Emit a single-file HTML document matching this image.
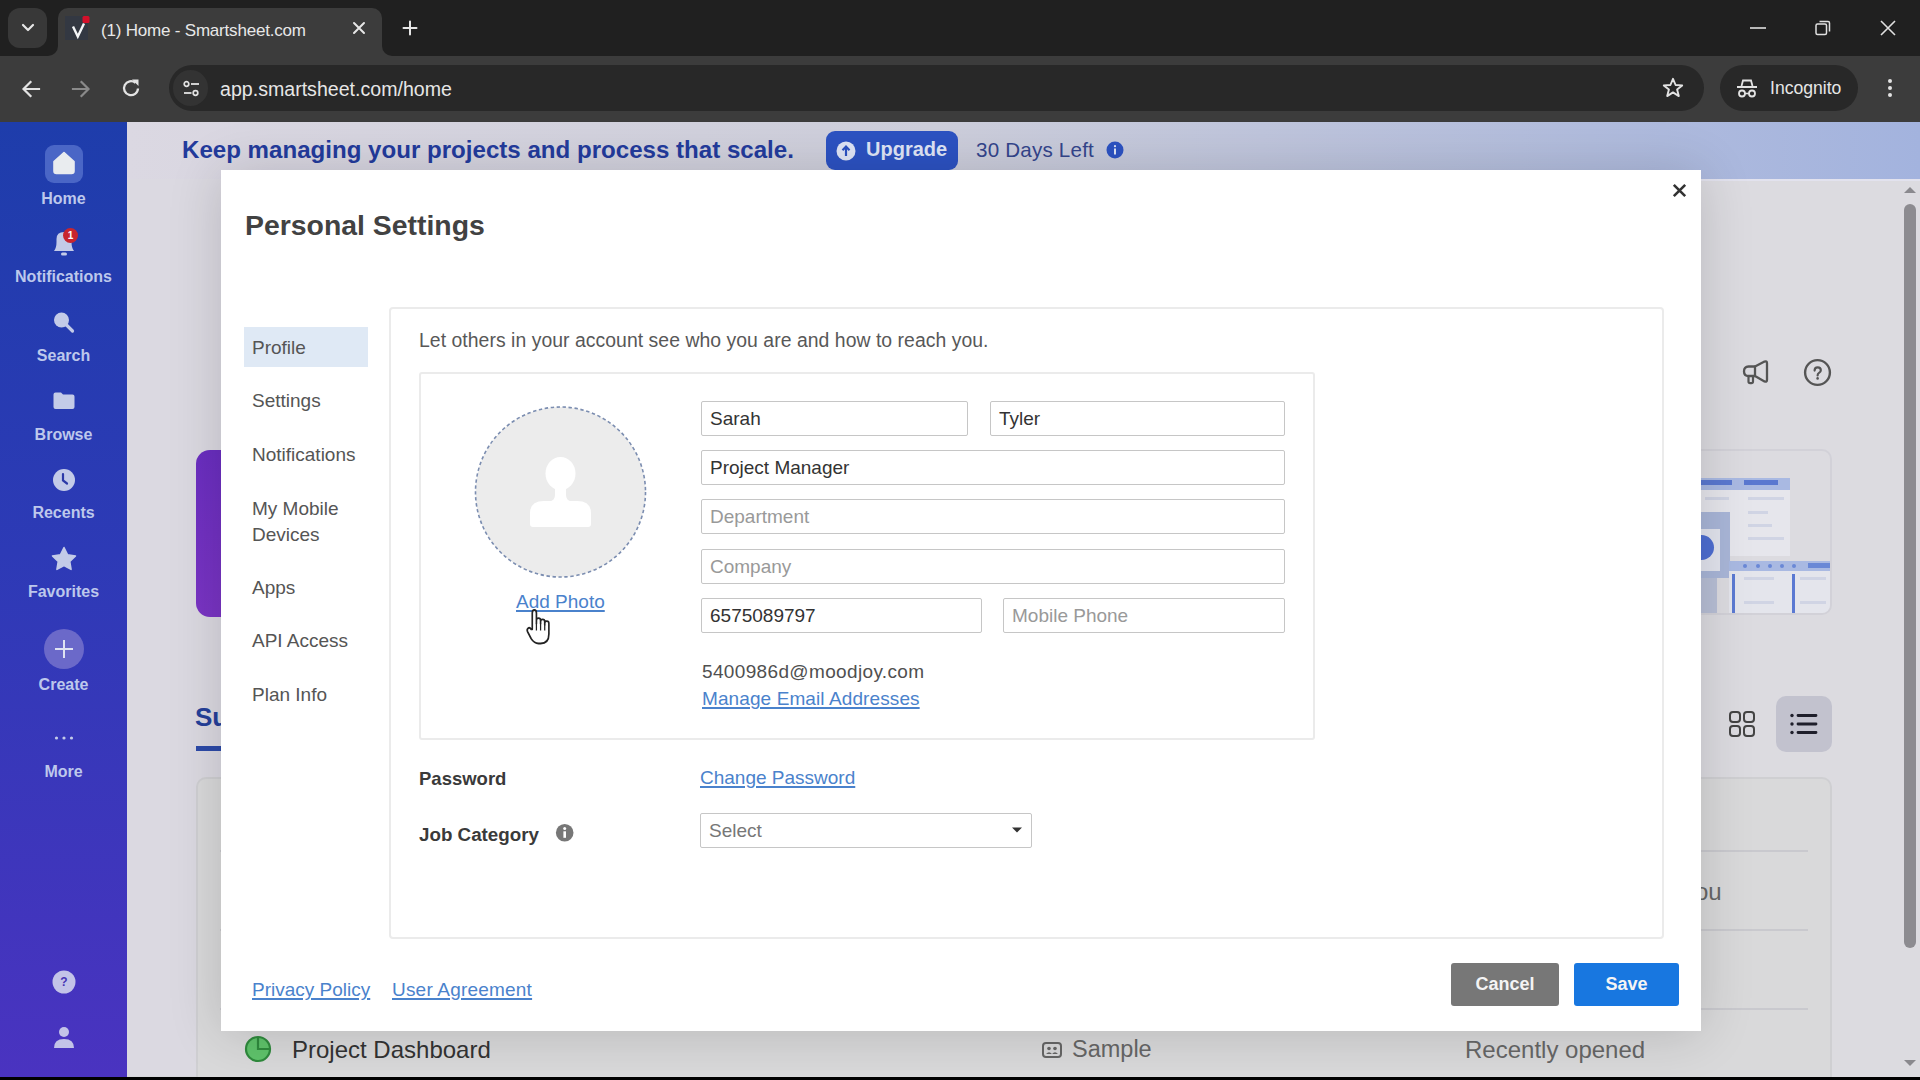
<!DOCTYPE html>
<html><head><meta charset="utf-8">
<style>
*{box-sizing:border-box;margin:0;padding:0}
html,body{width:1920px;height:1080px;overflow:hidden;background:#000;font-family:"Liberation Sans",sans-serif}
.abs{position:absolute}
#tabstrip{left:0;top:0;width:1920px;height:56px;background:#202020}
#toolbar{left:0;top:56px;width:1920px;height:66px;background:#3c3c3c}
#page{left:0;top:122px;width:1920px;height:955px;background:#d6d6da;overflow:hidden}
#sidebar{left:0;top:0;width:127px;height:955px;background:linear-gradient(180deg,#1e3dab 0%,#2d3ab6 45%,#4a33c0 100%)}
#banner{left:127px;top:0;width:1793px;height:57px;background:linear-gradient(90deg,#dbd8e2 0%,#cdcedb 45%,#a3b3de 100%)}
#modal{left:221px;top:170px;width:1480px;height:861px;background:#fff}
.sl{position:absolute;left:0;width:127px;text-align:center;font-size:16px;font-weight:bold;color:#bdc8ec;letter-spacing:0px;line-height:18px}
.t{position:absolute;white-space:nowrap}
.inp{position:absolute;border:1px solid #c6c6c6;border-radius:2px;padding-left:8px;font-size:19px;line-height:33px;white-space:nowrap;background:#fff}
.btn{position:absolute;border-radius:3px;color:#f4f4f4;font-size:18px;font-weight:bold;text-align:center;line-height:43px}
#bottombar{left:0;top:1077px;width:1920px;height:3px;background:#000}
</style></head>
<body>

<div id="tabstrip" class="abs">
  <div class="abs" style="left:8px;top:8px;width:39px;height:40px;border-radius:12px;background:#383838"></div>
  <svg class="abs" style="left:19px;top:20px" width="18" height="16" viewBox="0 0 18 16"><path d="M4 5 L9 10 L14 5" fill="none" stroke="#e6e6e6" stroke-width="2.2" stroke-linecap="round" stroke-linejoin="round"/></svg>
  <div class="abs" style="left:58px;top:8px;width:324px;height:48px;border-radius:10px 10px 0 0;background:#3c3c3c"></div>
  <div class="abs" style="left:48px;top:46px;width:10px;height:10px;background:#3c3c3c"></div><div class="abs" style="left:48px;top:46px;width:10px;height:10px;border-bottom-right-radius:10px;background:#202020"></div>
  <div class="abs" style="left:382px;top:46px;width:10px;height:10px;background:#3c3c3c"></div><div class="abs" style="left:382px;top:46px;width:10px;height:10px;border-bottom-left-radius:10px;background:#202020"></div>
  <svg class="abs" style="left:64px;top:15px" width="27" height="27" viewBox="0 0 27 27"><rect x="1" y="1" width="23" height="24" fill="#333842"/><path d="M9 11.5 L13.8 21.5 L20 8.5" fill="none" stroke="#f4f6f8" stroke-width="2.4" stroke-linejoin="miter"/><rect x="18.5" y="1" width="7" height="7" rx="1.5" fill="#d4102a"/></svg>
  <div class="abs" style="left:101px;top:21px;font-size:17px;color:#e8e8e8;white-space:nowrap;letter-spacing:-0.2px;">(1) Home - Smartsheet.com</div>
  <svg class="abs" style="left:352px;top:21px" width="14" height="14" viewBox="0 0 14 14"><path d="M2 2 L12 12 M12 2 L2 12" stroke="#e6e6e6" stroke-width="2" stroke-linecap="round"/></svg>
  <svg class="abs" style="left:402px;top:20px" width="16" height="16" viewBox="0 0 16 16"><path d="M8 1.5 V14.5 M1.5 8 H14.5" stroke="#e6e6e6" stroke-width="2" stroke-linecap="round"/></svg>
  <svg class="abs" style="left:1748px;top:18px" width="20" height="20" viewBox="0 0 20 20"><path d="M2 10 H18" stroke="#e0e0e0" stroke-width="1.6"/></svg>
  <svg class="abs" style="left:1813px;top:18px" width="20" height="20" viewBox="0 0 20 20"><rect x="3" y="6" width="10.5" height="10.5" rx="1.5" fill="none" stroke="#e0e0e0" stroke-width="1.5"/><path d="M6.5 3.5 H15 a1.5 1.5 0 0 1 1.5 1.5 V13.5" fill="none" stroke="#e0e0e0" stroke-width="1.5"/></svg>
  <svg class="abs" style="left:1878px;top:18px" width="20" height="20" viewBox="0 0 20 20"><path d="M3 3 L17 17 M17 3 L3 17" stroke="#e0e0e0" stroke-width="1.6"/></svg>
</div>
<div id="toolbar" class="abs">
  <svg class="abs" style="left:19px;top:21px" width="24" height="24" viewBox="0 0 24 24"><path d="M20 12 H5 M11.5 5 L4.5 12 L11.5 19" fill="none" stroke="#e3e3e3" stroke-width="2.2" stroke-linecap="square"/></svg>
  <svg class="abs" style="left:69px;top:21px" width="24" height="24" viewBox="0 0 24 24"><path d="M4 12 H19 M12.5 5 L19.5 12 L12.5 19" fill="none" stroke="#8a8a8a" stroke-width="2.2" stroke-linecap="square"/></svg>
  <svg class="abs" style="left:119px;top:20px" width="24" height="24" viewBox="0 0 24 24"><path d="M19 12.5 A7 7 0 1 1 16.5 6.8" fill="none" stroke="#e3e3e3" stroke-width="2.3"/><path d="M13 3.5 H19.5 V10 Z" fill="#e3e3e3"/></svg>
  <div class="abs" style="left:169px;top:9px;width:1535px;height:46px;border-radius:23px;background:#282828"></div>
  <div class="abs" style="left:173px;top:14px;width:35px;height:36px;border-radius:18px;background:#333333"></div>
  <svg class="abs" style="left:182px;top:23px" width="20" height="20" viewBox="0 0 20 20"><circle cx="4.5" cy="5" r="2.3" fill="none" stroke="#e3e3e3" stroke-width="1.7"/><path d="M9 5 H17" stroke="#e3e3e3" stroke-width="1.8"/><circle cx="13.5" cy="14" r="2.3" fill="none" stroke="#e3e3e3" stroke-width="1.7"/><path d="M2 14 H9.5" stroke="#e3e3e3" stroke-width="1.8"/></svg>
  <div class="abs" style="left:220px;top:22px;font-size:19.6px;color:#e6e6e6;white-space:nowrap">app.smartsheet.com/home</div>
  <svg class="abs" style="left:1661px;top:20px" width="24" height="24" viewBox="0 0 24 24"><path d="M12 2.8 L14.6 9 L21.2 9.4 L16.1 13.6 L17.8 20.1 L12 16.4 L6.2 20.1 L7.9 13.6 L2.8 9.4 L9.4 9 Z" fill="none" stroke="#e3e3e3" stroke-width="1.9" stroke-linejoin="round"/></svg>
  <div class="abs" style="left:1720px;top:9px;width:138px;height:46px;border-radius:23px;background:#282828"></div>
  <svg class="abs" style="left:1735px;top:21px" width="24" height="24" viewBox="0 0 24 24"><path d="M6.5 9 L8 3.5 H16 L17.5 9" fill="none" stroke="#e3e3e3" stroke-width="1.8"/><path d="M2 10 H22" stroke="#e3e3e3" stroke-width="2"/><circle cx="7" cy="16.5" r="3" fill="none" stroke="#e3e3e3" stroke-width="1.8"/><circle cx="17" cy="16.5" r="3" fill="none" stroke="#e3e3e3" stroke-width="1.8"/><path d="M10 16.5 H14" stroke="#e3e3e3" stroke-width="1.6"/></svg>
  <div class="abs" style="left:1770px;top:22px;font-size:17.6px;color:#e6e6e6;white-space:nowrap">Incognito</div>
  <svg class="abs" style="left:1880px;top:20px" width="20" height="24" viewBox="0 0 20 24"><circle cx="10" cy="5" r="2" fill="#e3e3e3"/><circle cx="10" cy="12" r="2" fill="#e3e3e3"/><circle cx="10" cy="19" r="2" fill="#e3e3e3"/></svg>
</div>
<div id="page" class="abs">

  <div class="abs" style="left:127px;top:0px;width:1793px;height:954px;background:#dbd9e1"></div>
  <div id="banner" class="abs"></div>
  <div class="abs" style="left:1690px;top:57px;width:230px;height:900px;border-radius:10px 0 0 0;background:#dcdbe0;border-top:2px solid #e2e2ee"></div>
  <div class="abs" style="left:182px;top:14px;font-size:24.1px;font-weight:bold;color:#233b9c;white-space:nowrap">Keep managing your projects and process that scale.</div>
  <div class="abs" style="left:826px;top:9px;width:132px;height:39px;border-radius:9px;background:#2c52c2"></div>
  <svg class="abs" style="left:836px;top:19px" width="20" height="20" viewBox="0 0 20 20"><circle cx="10" cy="10" r="9.5" fill="#dfe5f6"/><path d="M10 15 V6 M6.5 9.2 L10 5.6 L13.5 9.2" fill="none" stroke="#2c52c2" stroke-width="2.2"/></svg>
  <div class="abs" style="left:866px;top:16px;font-size:20px;font-weight:bold;color:#dfe5f6;white-space:nowrap">Upgrade</div>
  <div class="abs" style="left:976px;top:16px;font-size:20.6px;color:#34458c;white-space:nowrap;letter-spacing:0.2px">30 Days Left</div>
  <svg class="abs" style="left:1106px;top:19px" width="18" height="18" viewBox="0 0 18 18"><circle cx="9" cy="9" r="8.5" fill="#2c52c2"/><rect x="8" y="7.5" width="2" height="6" fill="#dfe5f6"/><circle cx="9" cy="5.2" r="1.1" fill="#dfe5f6"/></svg>
  <!-- right-side header icons -->
  <svg class="abs" style="left:1742px;top:238px" width="28" height="26" viewBox="0 0 28 26"><path d="M13 6.5 L22.5 1.6 Q25 0.6 25 3.2 V19.8 Q25 22.4 22.5 21.4 L13 16 Z" fill="none" stroke="#555" stroke-width="2.3" stroke-linejoin="round"/><path d="M13 6.5 H6.5 Q2 6.5 2 11.2 Q2 16 6.5 16 H13" fill="none" stroke="#555" stroke-width="2.3" stroke-linejoin="round"/><path d="M6.5 16 V21.5 Q6.5 23.2 8.2 23.2 H9.3 Q11 23.2 11 21.5 V16.5" fill="none" stroke="#555" stroke-width="2.2"/></svg>
  <svg class="abs" style="left:1803px;top:236px" width="29" height="29" viewBox="0 0 29 29"><circle cx="14.5" cy="14.5" r="12.4" fill="none" stroke="#555" stroke-width="2.4"/><path d="M11.6 12.6 Q11.6 9.4 14.7 9.4 Q17.8 9.4 17.8 12.2 Q17.8 13.9 16 14.9 Q14.6 15.7 14.6 17.4" fill="none" stroke="#555" stroke-width="2.2" stroke-linecap="round"/><circle cx="14.6" cy="20.4" r="1.3" fill="#555"/></svg>
  <!-- right illustration card -->
  <div class="abs" style="left:1690px;top:327px;width:142px;height:166px;border-radius:10px;border:2px solid #d2d1d8;background:#dcdbe0;overflow:hidden">
    <div class="abs" style="left:9px;top:27px;width:89px;height:12px;background:#a9b9e2"></div>
    <div class="abs" style="left:9px;top:29px;width:31px;height:5px;background:#5a78d0"></div>
    <div class="abs" style="left:52px;top:29px;width:34px;height:5px;background:#5a78d0"></div>
    <div class="abs" style="left:9px;top:39px;width:89px;height:66px;background:#e6e6ec"></div>
    <div class="abs" style="left:13px;top:46px;width:24px;height:3px;background:#d0d4e4"></div>
    <div class="abs" style="left:56px;top:46px;width:36px;height:3px;background:#d0d4e4"></div>
    <div class="abs" style="left:56px;top:60px;width:20px;height:3px;background:#d0d4e4"></div>
    <div class="abs" style="left:56px;top:73px;width:24px;height:3px;background:#d0d4e4"></div>
    <div class="abs" style="left:56px;top:86px;width:36px;height:3px;background:#d0d4e4"></div>
    <div class="abs" style="left:0px;top:61px;width:38px;height:66px;background:#a9b6d8"></div>
    <div class="abs" style="left:0px;top:78px;width:28px;height:42px;background:#e2e4ee"></div>
    <div class="abs" style="left:-3px;top:84px;width:25px;height:25px;border-radius:13px;background:#4e6ed2"></div>
    <div class="abs" style="left:0px;top:127px;width:25px;height:40px;background:#b8bfd6"></div>
    <div class="abs" style="left:37px;top:110px;width:103px;height:10px;background:#a9b9e2"></div>
    <div class="abs" style="left:51px;top:113px;width:4px;height:4px;border-radius:2px;background:#6a88d6"></div>
    <div class="abs" style="left:64px;top:113px;width:4px;height:4px;border-radius:2px;background:#6a88d6"></div>
    <div class="abs" style="left:76px;top:113px;width:4px;height:4px;border-radius:2px;background:#6a88d6"></div>
    <div class="abs" style="left:88px;top:113px;width:4px;height:4px;border-radius:2px;background:#6a88d6"></div>
    <div class="abs" style="left:100px;top:113px;width:4px;height:4px;border-radius:2px;background:#6a88d6"></div>
    <div class="abs" style="left:116px;top:112px;width:22px;height:5px;background:#6a88d6"></div>
    <div class="abs" style="left:37px;top:120px;width:103px;height:46px;background:#e4e5ec"></div>
    <div class="abs" style="left:52px;top:126px;width:30px;height:3px;background:#d0d4e4"></div>
    <div class="abs" style="left:52px;top:150px;width:30px;height:3px;background:#d0d4e4"></div>
    <div class="abs" style="left:108px;top:126px;width:26px;height:3px;background:#d0d4e4"></div>
    <div class="abs" style="left:108px;top:150px;width:26px;height:3px;background:#d0d4e4"></div>
    <div class="abs" style="left:40px;top:123px;width:3px;height:44px;background:#5b79d2"></div>
    <div class="abs" style="left:100px;top:123px;width:3px;height:44px;background:#5b79d2"></div>
  </div>
  <!-- view toggles -->
  <svg class="abs" style="left:1728px;top:588px" width="28" height="28" viewBox="0 0 28 28"><rect x="2" y="2" width="10" height="10" rx="3" fill="none" stroke="#444" stroke-width="2"/><rect x="16" y="2" width="10" height="10" rx="3" fill="none" stroke="#444" stroke-width="2"/><rect x="2" y="16" width="10" height="10" rx="3" fill="none" stroke="#444" stroke-width="2"/><rect x="16" y="16" width="10" height="10" rx="3" fill="none" stroke="#444" stroke-width="2"/></svg>
  <div class="abs" style="left:1776px;top:574px;width:56px;height:56px;border-radius:10px;background:#c2c2ce"></div>
  <svg class="abs" style="left:1789px;top:588px" width="30" height="28" viewBox="0 0 30 28"><circle cx="3" cy="5.5" r="1.7" fill="#1e1e2a"/><circle cx="3" cy="14" r="1.7" fill="#1e1e2a"/><circle cx="3" cy="22.5" r="1.7" fill="#1e1e2a"/><path d="M9 5.5 H27 M9 14 H27 M9 22.5 H27" stroke="#1e1e2a" stroke-width="2.8" stroke-linecap="round"/></svg>
  <!-- big list card -->
  <div class="abs" style="left:196px;top:655px;width:1636px;height:330px;border-radius:10px;border:2px solid #cfcfd2;background:#d9d9da"></div>
  <div class="abs" style="left:220px;top:728px;width:1588px;height:2px;background:#c9c9ce"></div>
  <div class="abs" style="left:220px;top:807px;width:1588px;height:2px;background:#c9c9ce"></div>
  <div class="abs" style="left:220px;top:886px;width:1588px;height:2px;background:#c9c9ce"></div>
  <div class="abs" style="left:1695px;top:756px;font-size:24px;color:#666;white-space:nowrap">ou</div>
  <!-- left-side behind modal -->
  <div class="abs" style="left:196px;top:328px;width:60px;height:167px;border-radius:14px;background:linear-gradient(180deg,#6a2ec0,#7a34c4)"></div>
  <div class="abs" style="left:195px;top:580px;font-size:26px;font-weight:bold;color:#25409a;white-space:nowrap">Su</div>
  <div class="abs" style="left:196px;top:624px;width:40px;height:5px;background:#2c4aa8"></div>
  <!-- bottom row -->
  <svg class="abs" style="left:244px;top:913px" width="28" height="28" viewBox="0 0 28 28"><circle cx="14" cy="14" r="12" fill="#5fc36b" stroke="#2f8a3d" stroke-width="2.2"/><path d="M14 3 V14 H25" fill="none" stroke="#2f8a3d" stroke-width="2.2"/></svg>
  <div class="abs" style="left:292px;top:914px;font-size:24px;color:#333;white-space:nowrap">Project Dashboard</div>
  <svg class="abs" style="left:1041px;top:918px" width="22" height="20" viewBox="0 0 22 20"><rect x="2" y="3" width="18" height="14" rx="3" fill="none" stroke="#666" stroke-width="2"/><circle cx="8" cy="8.5" r="1.8" fill="#666"/><circle cx="14" cy="8.5" r="1.8" fill="#666"/><path d="M5 14 Q8 10.5 11 14 Q14 10.5 17 14" fill="#666"/></svg>
  <div class="abs" style="left:1072px;top:914px;font-size:23.5px;color:#666;white-space:nowrap">Sample</div>
  <div class="abs" style="left:1465px;top:914px;font-size:24px;color:#666;white-space:nowrap">Recently opened</div>
  <!-- scrollbar -->
  <svg class="abs" style="left:1903px;top:63px" width="14" height="10" viewBox="0 0 14 10"><path d="M1 8 L7 2 L13 8 Z" fill="#8a898e"/></svg>
  <div class="abs" style="left:1904px;top:82px;width:12px;height:744px;border-radius:6px;background:#8c8b90"></div>
  <svg class="abs" style="left:1903px;top:936px" width="14" height="10" viewBox="0 0 14 10"><path d="M1 2 L7 8 L13 2 Z" fill="#8a898e"/></svg>

  <div id="sidebar" class="abs">
    <div class="abs" style="left:45px;top:23px;width:38px;height:38px;border-radius:9px;background:#4a66c6"></div>
    <svg class="abs" style="left:52px;top:27px" width="24" height="26" viewBox="0 0 24 26"><path d="M2 12.5 L12 3.5 L22 12.5 V22 Q22 24.5 19.5 24.5 H4.5 Q2 24.5 2 22 Z" fill="#e9ecef" stroke="#e9ecef" stroke-width="1.6" stroke-linejoin="round"/></svg>
    <div class="sl" style="top:67.5px">Home</div>
    <svg class="abs" style="left:51px;top:102px" width="26" height="34" viewBox="0 0 26 34"><path d="M3 27 Q5.5 24 5.5 18 V15 Q5.5 8 13 8 Q20.5 8 20.5 15 V18 Q20.5 24 23 27 Z" fill="#c3cbe8"/><rect x="10" y="28.5" width="6" height="3" rx="1.5" fill="#c3cbe8"/></svg>
    <div class="abs" style="left:63px;top:106px;width:15px;height:15px;border-radius:8px;background:#c8252e;color:#fff;font-size:10px;font-weight:bold;text-align:center;line-height:15px">1</div>
    <div class="sl" style="top:145.5px">Notifications</div>
    <svg class="abs" style="left:50px;top:187px" width="26" height="26" viewBox="0 0 26 26"><circle cx="11.5" cy="11" r="7.5" fill="#c3cbe8"/><path d="M16.5 16 L22.5 22" stroke="#c3cbe8" stroke-width="3.2" stroke-linecap="round"/></svg>
    <div class="sl" style="top:224.5px">Search</div>
    <svg class="abs" style="left:52px;top:269px" width="24" height="20" viewBox="0 0 24 20"><path d="M1.5 3.5 Q1.5 1.5 3.5 1.5 H9 L11 3.5 H20.5 Q22.5 3.5 22.5 5.5 V16 Q22.5 18 20.5 18 H3.5 Q1.5 18 1.5 16 Z" fill="#c3cbe8"/></svg>
    <div class="sl" style="top:303.5px">Browse</div>
    <svg class="abs" style="left:51px;top:345px" width="26" height="26" viewBox="0 0 26 26"><circle cx="13" cy="13" r="11" fill="#c3cbe8"/><path d="M12 7 V13.5 L16 16.5" fill="none" stroke="#2c3aa8" stroke-width="2.2" stroke-linecap="round"/></svg>
    <div class="sl" style="top:381.5px">Recents</div>
    <svg class="abs" style="left:50px;top:424px" width="28" height="26" viewBox="0 0 28 26"><path d="M14 1.5 L17.6 8.8 L25.5 9.9 L19.8 15.5 L21.1 23.4 L14 19.7 L6.9 23.4 L8.2 15.5 L2.5 9.9 L10.4 8.8 Z" fill="#c3cbe8" stroke="#c3cbe8" stroke-width="1.5" stroke-linejoin="round"/></svg>
    <div class="sl" style="top:460.5px">Favorites</div>
    <div class="abs" style="left:44px;top:507px;width:40px;height:40px;border-radius:20px;background:#6b69c9"></div>
    <svg class="abs" style="left:52px;top:515px" width="24" height="24" viewBox="0 0 24 24"><path d="M12 3 V21 M3 12 H21" stroke="#dfe2f2" stroke-width="2"/></svg>
    <div class="sl" style="top:553.5px">Create</div>
    <svg class="abs" style="left:52px;top:612px" width="24" height="8" viewBox="0 0 24 8"><circle cx="4.5" cy="4" r="1.6" fill="#c3cbe8"/><circle cx="12" cy="4" r="1.6" fill="#c3cbe8"/><circle cx="19.5" cy="4" r="1.6" fill="#c3cbe8"/></svg>
    <div class="sl" style="top:640.5px">More</div>
    <svg class="abs" style="left:52px;top:848px" width="24" height="24" viewBox="0 0 24 24"><circle cx="12" cy="12" r="11.5" fill="#c3c3e8"/><text x="12" y="16" font-size="12" font-weight="bold" text-anchor="middle" fill="#4633b4" font-family="Liberation Sans">?</text></svg>
    <svg class="abs" style="left:52px;top:903px" width="24" height="24" viewBox="0 0 24 24"><circle cx="12" cy="7" r="5" fill="#c3c3e8"/><path d="M2 23 Q2 14 12 14 Q22 14 22 23 Z" fill="#c3c3e8"/></svg>
  </div>
</div>
<div class="abs" style="left:221px;top:170px;width:1480px;height:861px;background:#fff;box-shadow:0 2px 50px rgba(0,0,0,0.16)"></div>
<div class="t" style="left:245px;top:208.30px;font-size:28.4px;line-height:34px;color:#424242;font-weight:bold;">Personal Settings</div>
<svg class="abs" style="left:1672px;top:183px" width="15" height="15" viewBox="0 0 15 15"><path d="M1.8 1.8 L13.2 13.2 M13.2 1.8 L1.8 13.2" stroke="#333" stroke-width="2.6"/></svg>
<div class="abs" style="left:244px;top:327px;width:124px;height:40px;background:#dfe9f5"></div>
<div class="t" style="left:252px;top:335.82px;font-size:19px;line-height:24px;color:#555;">Profile</div>
<div class="t" style="left:252px;top:389.42px;font-size:19px;line-height:24px;color:#555;">Settings</div>
<div class="t" style="left:252px;top:442.92px;font-size:19px;line-height:24px;color:#555;">Notifications</div>
<div class="t" style="left:252px;top:497.42px;font-size:19px;line-height:24px;color:#555;">My Mobile</div>
<div class="t" style="left:252px;top:522.92px;font-size:19px;line-height:24px;color:#555;">Devices</div>
<div class="t" style="left:252px;top:576.22px;font-size:19px;line-height:24px;color:#555;">Apps</div>
<div class="t" style="left:252px;top:629.22px;font-size:19px;line-height:24px;color:#555;">API Access</div>
<div class="t" style="left:252px;top:682.92px;font-size:19px;line-height:24px;color:#555;">Plan Info</div>
<div class="abs" style="left:389px;top:307px;width:1275px;height:632px;border:2px solid #ebebeb;border-radius:4px"></div>
<div class="t" style="left:419px;top:327.88px;font-size:19.4px;line-height:24px;color:#585858;letter-spacing:0.04px;">Let others in your account see who you are and how to reach you.</div>
<div class="abs" style="left:419px;top:372px;width:896px;height:368px;border:2px solid #ebebeb;border-radius:3px"></div>
<svg class="abs" style="left:470px;top:402px" width="182" height="182" viewBox="0 0 182 182"><circle cx="90.5" cy="90" r="85" fill="#ececec" stroke="#7b8db0" stroke-width="1.6" stroke-dasharray="3.4 2.6"/><ellipse cx="90.5" cy="71.5" rx="15" ry="16.5" fill="#fff"/><path d="M85 84 H96 V93 Q96 98 101 99.5 H80 Q85 98 85 93 Z" fill="#fff"/><path d="M60 122 V111 Q60 99 74 99 H107 Q121 99 121 111 V122 Q121 125 118 125 H63 Q60 125 60 122 Z" fill="#fff"/></svg>
<div class="t" style="left:516px;top:590.17px;font-size:19px;line-height:24px;color:#4a82cc;text-decoration:underline;text-underline-offset:2px;text-decoration-thickness:1.5px;">Add Photo</div>
<svg class="abs" style="left:525px;top:607px" width="27" height="40" viewBox="0 0 26 34" preserveAspectRatio="none"><path d="M7 19 V5 Q7 2.5 9 2.5 Q11 2.5 11 5 V14 V11.5 Q11 9.5 13 9.5 Q15 9.5 15 11.5 V14 V12.5 Q15 10.5 17 10.5 Q19 10.5 19 12.5 V15 V14 Q19 12 21 12 Q23 12 23 14 V23 Q23 31 15 31 H13 Q9 31 6 27 L2.5 21 Q1.5 19 3 18 Q4.5 17 6 19 Z" fill="#fff" stroke="#222" stroke-width="1.6" stroke-linejoin="round"/><path d="M11 14 V20 M15 14 V20 M19 15 V20" stroke="#222" stroke-width="1.2"/></svg>
<div class="inp" style="left:701px;top:401px;width:267px;height:35px;color:#333">Sarah</div>
<div class="inp" style="left:990px;top:401px;width:295px;height:35px;color:#333">Tyler</div>
<div class="inp" style="left:701px;top:450px;width:584px;height:35px;color:#333">Project Manager</div>
<div class="inp" style="left:701px;top:499px;width:584px;height:35px;color:#999">Department</div>
<div class="inp" style="left:701px;top:549px;width:584px;height:35px;color:#999">Company</div>
<div class="inp" style="left:701px;top:598px;width:281px;height:35px;color:#333">6575089797</div>
<div class="inp" style="left:1003px;top:598px;width:282px;height:35px;color:#999">Mobile Phone</div>
<div class="t" style="left:702px;top:659.72px;font-size:19px;line-height:24px;color:#505050;letter-spacing:0.35px;">5400986d@moodjoy.com</div>
<div class="t" style="left:702px;top:687.42px;font-size:19px;line-height:24px;color:#4a82cc;text-decoration:underline;text-underline-offset:2px;text-decoration-thickness:1.5px;letter-spacing:0.1px;">Manage Email Addresses</div>
<div class="t" style="left:419px;top:766.59px;font-size:18.5px;line-height:24px;color:#3a3a3a;font-weight:bold;">Password</div>
<div class="t" style="left:700px;top:766.42px;font-size:19px;line-height:24px;color:#4a82cc;text-decoration:underline;text-underline-offset:2px;text-decoration-thickness:1.5px;">Change Password</div>
<div class="t" style="left:419px;top:823.09px;font-size:18.8px;line-height:24px;color:#3a3a3a;font-weight:bold;">Job Category</div>
<svg class="abs" style="left:555px;top:823px" width="20" height="20" viewBox="0 0 20 20"><circle cx="9.7" cy="9.8" r="8.8" fill="#777"/><rect x="8.4" y="8.3" width="2.6" height="6.5" fill="#fff"/><circle cx="9.7" cy="5.6" r="1.5" fill="#fff"/></svg>
<div class="inp" style="left:700px;top:813px;width:332px;height:35px;color:#777">Select</div>
<svg class="abs" style="left:1010px;top:826px" width="14" height="8" viewBox="0 0 14 8"><path d="M2 1.5 H12 L7 6.5 Z" fill="#333"/></svg>
<div class="t" style="left:252px;top:978.12px;font-size:19px;line-height:24px;color:#4a82cc;text-decoration:underline;text-underline-offset:2px;text-decoration-thickness:1.5px;">Privacy Policy</div>
<div class="t" style="left:392px;top:978.12px;font-size:19px;line-height:24px;color:#4a82cc;text-decoration:underline;text-underline-offset:2px;text-decoration-thickness:1.5px;letter-spacing:0.2px;">User Agreement</div>
<div class="btn" style="left:1451px;top:963px;width:108px;height:43px;background:#777">Cancel</div>
<div class="btn" style="left:1574px;top:963px;width:105px;height:43px;background:#1877e0">Save</div>
<div id="bottombar" class="abs"></div>
</body></html>
